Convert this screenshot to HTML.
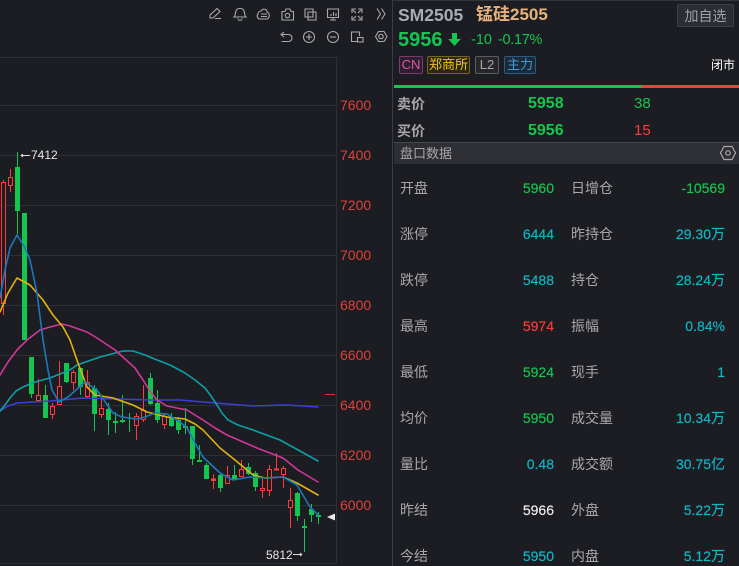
<!DOCTYPE html>
<html lang="zh"><head><meta charset="utf-8"><title>SM2505</title>
<style>
html,body{margin:0;padding:0;background:#1c1d22}
body{width:739px;height:566px;position:relative;overflow:hidden;font-family:"Liberation Sans","Noto Sans CJK SC",sans-serif;color:#aaa}
.a{position:absolute;white-space:nowrap;line-height:20px}
.l{color:#a8a8a8;font-size:14px}
.v{font-size:14px;text-align:right;-webkit-text-stroke:.15px currentColor}
.g{color:#14c64f}.r{color:#ff3b3b}.c{color:#0fb8c8}.w{color:#eee}
.tag{position:absolute;top:56px;height:18px;box-sizing:border-box;border:1px solid;border-radius:2px;font-size:13px;line-height:16px;text-align:center;white-space:nowrap}
</style></head><body>
<svg class="a" style="left:0;top:0;line-height:0" width="392" height="566" viewBox="0 0 392 566" fill="none">
<g stroke="#2f3034"><path d="M0 57.500H336.500V563.500H0M0 105.500H336M0 155.500H336M0 205.500H336M0 255.500H336M0 305.500H336M0 355.500H336M0 405.500H336M0 455.500H336M0 505.500H336"/></g>
<g stroke="#a9a9a9" stroke-width="1.100">
<path d="M210 18l0-3 7-6.500 3 3-7 6.500zM215 18.500h6"/>
<path d="M234 17c2-2 1-4 2-6 1-3.500 7-3.500 8 0 1 2 0 4 2 6zM238 18.500a2 2 0 0 0 4 0"/>
<path d="M260 19a3 3 0 0 1-2-5c0-2 2-3 3-3 2-3 6-2 6 1 3 1 3 6 0 7zM261 14h6M261 16.500h6"/>
<path d="M282 11.500h3l1-2.500h4l1 2.500h2.500v8.500h-11.500z"/><circle cx="287.500" cy="15.500" r="2.200"/>
<path d="M305 9h8v8h-8zM308 12h8v8h-8z"/>
<path d="M327.500 9h11v8.500h-11zM333 17.500v2M330 20h6"/><path d="M331 16v-2M333.500 16v-4M336 16v-3"/>
<path d="M352 13V9h4M358 9h4v4M362 16v4h-4M356 20h-4v-4M353 10l3 3M361 10l-3 3M361 19l-3-3M353 19l3-3"/>
<path d="M377 8.500l3.500 5.500-3.500 5.500M381.500 8.500l3.500 5.500-3.500 5.500"/>
<path d="M284 32l-3 2.500 3 2.500M281 34.500h7.500a3.500 3.500 0 0 1 0 7h-7"/>
<circle cx="309" cy="37" r="5.500"/><path d="M306 37h6M309 34v6"/>
<circle cx="333" cy="37" r="5.500"/><path d="M330 37h6"/>
<path d="M358 41.500h-6.500V32h8v4M357.500 37.500h5.500v4.500h-5.500z"/>
<path d="M378.500 31.500h5.500l3 5-3 5h-5.500l-3-5z"/><circle cx="381" cy="36.500" r="2.200"/>
</g>
<!-- green candles -->
<g fill="#14c64f" stroke="none">
<rect x="17" y="152" width="1" height="82"/><rect x="15" y="167" width="5" height="44"/>
<rect x="22" y="213" width="5" height="127"/>
<rect x="31" y="357" width="1" height="41"/><rect x="29" y="357" width="5" height="37"/>
<rect x="45" y="385" width="1" height="33"/><rect x="43" y="395" width="5" height="23"/>
<rect x="66" y="363" width="1" height="20"/><rect x="64" y="363" width="5" height="19"/>
<rect x="80" y="368" width="1" height="27"/><rect x="78" y="368" width="5" height="19"/>
<rect x="94" y="385" width="1" height="46"/><rect x="92" y="388" width="5" height="26"/>
<rect x="108" y="403" width="1" height="32"/><rect x="106" y="409" width="5" height="11"/>
<rect x="115" y="412" width="1" height="21"/><rect x="113" y="421" width="5" height="2"/>
<rect x="122" y="395" width="1" height="28"/><rect x="120" y="420" width="5" height="2"/>
<rect x="129" y="413" width="1" height="19"/>
<rect x="150" y="373" width="1" height="32"/><rect x="148" y="378" width="5" height="26"/>
<rect x="157" y="390" width="1" height="33"/><rect x="155" y="403" width="5" height="17"/>
<rect x="171" y="413" width="1" height="14"/><rect x="169" y="417" width="5" height="9"/>
<rect x="178" y="417" width="1" height="17"/><rect x="176" y="420" width="5" height="10"/>
<rect x="185" y="408" width="1" height="26"/><rect x="183" y="426" width="5" height="2"/>
<rect x="192" y="426" width="1" height="39"/><rect x="190" y="426" width="5" height="33"/>
<rect x="199" y="445" width="1" height="17"/><rect x="197" y="460" width="5" height="2"/>
<rect x="206" y="463" width="1" height="16"/><rect x="204" y="465" width="5" height="14"/>
<rect x="220" y="473" width="1" height="19"/><rect x="218" y="475" width="5" height="13"/>
<rect x="234" y="465" width="1" height="14"/><rect x="232" y="475" width="5" height="4"/>
<rect x="248" y="463" width="1" height="12"/><rect x="246" y="467" width="5" height="7"/>
<rect x="255" y="471" width="1" height="20"/><rect x="253" y="473" width="5" height="14"/>
<rect x="297" y="492" width="1" height="29"/><rect x="295" y="493" width="5" height="23"/>
<rect x="304" y="519" width="1" height="33"/><rect x="302" y="526" width="5" height="2"/>
<rect x="311" y="504" width="1" height="18"/><rect x="309" y="509" width="5" height="6"/>
<rect x="318" y="512" width="1" height="12"/><rect x="316" y="515" width="5" height="2"/>
</g>
<!-- red candles -->
<g stroke="#ff3b3b" fill="#1c1d22">
<path d="M3.500 180V182M3.500 303V315M10.500 169V177M10.500 185V192M38.500 379V395M38.500 400V401M52.500 403V406M52.500 414V419M59.500 361V386M59.500 404V405M73.500 370V372M73.500 382V390M87.500 370V382M87.500 396V399M101.500 397V408M101.500 414V418M136.500 413V416M136.500 425V440M143.500 385V410M143.500 419V422M164.500 414V416M164.500 424V429M213.500 474V489M227.500 466V475M241.500 460V469M262.500 477V488M262.500 490V498M269.500 465V469M269.500 490V496M276.500 453V470M283.500 466V468M283.500 474V488M290.500 488V500M290.500 507V528"/>
<rect x="1.500" y="182.500" width="4" height="121"/>
<rect x="8.500" y="177.500" width="4" height="8"/>
<rect x="36.500" y="395.500" width="4" height="5"/>
<rect x="50.500" y="406.500" width="4" height="8"/>
<rect x="57.500" y="386.500" width="4" height="18"/>
<rect x="71.500" y="372.500" width="4" height="10"/>
<rect x="85.500" y="382.500" width="4" height="14"/>
<rect x="99.500" y="408.500" width="4" height="6"/>
<rect x="134.500" y="416.500" width="4" height="9"/>
<rect x="141.500" y="410.500" width="4" height="9"/>
<rect x="162.500" y="416.500" width="4" height="8"/>
<rect x="211.500" y="479" width="4" height="1.500" fill="#ff3b3b"/>
<rect x="225.500" y="475.500" width="4" height="8"/>
<rect x="239.500" y="469.500" width="4" height="7"/>
<rect x="260.500" y="488.500" width="4" height="2"/>
<rect x="267.500" y="469.500" width="4" height="21"/>
<rect x="274.500" y="469" width="4" height="1" fill="#ff3b3b"/>
<rect x="281.500" y="468.500" width="4" height="6"/>
<rect x="288.500" y="500.500" width="4" height="7"/>
</g>
<!-- MA lines -->
<g stroke-width="1.600" stroke-linejoin="round" stroke-linecap="round">
<polyline stroke="#3a3fd6" points="0,411 8,406 17,403 50,401 83,398 117,399 150,400 180,400 203,402 253,406 287,405 318,407"/>
<polyline stroke="#0f9ea6" points="0,411 5,405 10,398 16,391 23,387 35,382 50,378 70,370 77,365 100,357 123,351 133,351 145,355 157,360 170,365 185,373 195,380 205,388 211,396 217,405 222,413 228,420 238,425 253,430 280,440 300,451 318,461"/>
<polyline stroke="#d0379a" points="0,375 8,362 17,350 27,340 40,330 50,327 62,324 70,326 87,332 97,338 115,350 125,359 135,368 143,380 150,391 157,400 167,406 187,410 203,420 215,428 227,435 257,448 283,458 298,470 318,482"/>
<polyline stroke="#e3b10c" points="0,312 8,293 17,278 30,285 43,300 53,315 63,327 70,340 78,363 87,387 95,395 113,398 133,405 147,412 167,417 185,419 195,424 203,430 220,448 235,460 253,475 265,478 283,477 297,483 318,495"/>
<polyline stroke="#1b78bd" points="0,298 5,270 10,248 17,235 24,246 30,260 37,293 43,340 48,370 52,390 59,402 68,397 85,382 97,390 113,413 122,417 137,419 145,417 155,413 167,414 180,422 187,428 195,443 203,457 220,473 233,480 250,477 267,478 283,477 297,485 310,507 318,515"/>
</g>
<path d="M325 394.500H335" stroke="#e0352f"/>
<path d="M327 517l8-3.500v7z" fill="#eee"/>
<path d="M21 155.500H30M21 155.500l2-1.500M21 155.500l2 1.500" stroke="#ddd"/>
<path d="M293 554.500H302M302 554.500l-2-1.500M302 554.500l-2 1.500" stroke="#ddd"/>
<text x="31" y="159" font-size="12" fill="#e6e6e6" font-family="Liberation Sans">7412</text>
<text x="266" y="559" font-size="12" fill="#e6e6e6" font-family="Liberation Sans">5812</text>
<g font-size="14" fill="#e0403a" font-family="Liberation Sans">
<text x="340" y="110">7600</text><text x="340" y="160">7400</text><text x="340" y="210">7200</text><text x="340" y="260">7000</text><text x="340" y="310">6800</text><text x="340" y="360">6600</text><text x="340" y="410">6400</text><text x="340" y="460">6200</text><text x="340" y="510">6000</text>
</g>
</svg>

<div class="a" style="left:392px;top:0;width:1px;height:566px;background:#3c3d42"></div>
<div class="a" style="left:393px;top:0;width:346px;height:1px;background:#35363a"></div>

<div class="a" style="left:398px;top:5px;font-size:17.500px;font-weight:bold;color:#a9adb3">SM2505</div>
<div class="a" style="left:476px;top:5px;font-size:17px;font-weight:bold;color:#e8b27c">锰硅2505</div>
<div class="a" style="left:677px;top:4px;width:57px;height:23px;box-sizing:border-box;background:#2b2d32;border:1px solid #3d3f44;border-radius:2px;font-size:14px;line-height:22px;text-align:center;color:#9fa3a8">加自选</div>

<div class="a g" style="left:398px;top:30px;font-size:20px;font-weight:bold">5956</div>
<svg class="a" style="left:447px;top:32px" width="15" height="15" viewBox="0 0 15 15"><path d="M5 1h5v6h3.800L7.500 14 1.200 7H5z" fill="#14c64f"/></svg>
<div class="a g" style="left:471px;top:30px;font-size:14.500px">-10</div>
<div class="a g" style="left:498px;top:30px;font-size:14.500px;letter-spacing:-.3px">-0.17%</div>

<div class="tag" style="left:399px;width:24px;border-color:#7a3b6d;color:#e6539f;background:#2a2030">CN</div>
<div class="tag" style="left:427px;width:43px;border-color:#75651f;color:#f2c40f;background:#2a2718">郑商所</div>
<div class="tag" style="left:475px;width:24px;border-color:#5a5c60;color:#a8a8a8;background:#26272b">L2</div>
<div class="tag" style="left:504px;width:32px;border-color:#2b5a82;color:#3d9be0;background:#1c2a38">主力</div>
<div class="a w" style="left:711px;top:55px;font-size:12px;color:#fff">闭市</div>

<div class="a" style="left:394px;top:85px;width:247px;height:3px;background:#14c64f"></div>
<div class="a" style="left:641px;top:85px;width:98px;height:3px;background:#ff3b3b"></div>

<div class="a l" style="left:397px;top:94px;font-weight:bold">卖价</div>
<div class="a g" style="left:528px;top:94px;font-size:16px;font-weight:bold">5958</div>
<div class="a g" style="left:634px;top:94px;font-size:15px">38</div>
<div class="a l" style="left:397px;top:121px;font-weight:bold">买价</div>
<div class="a g" style="left:528px;top:121px;font-size:16px;font-weight:bold">5956</div>
<div class="a r" style="left:634px;top:121px;font-size:15px">15</div>

<div class="a" style="left:394px;top:142px;width:345px;height:22px;background:#2d2f34;border-top:1px solid #45474b;box-sizing:border-box"></div>
<div class="a" style="left:400px;top:144px;font-size:13px;color:#a8a8a8">盘口数据</div>
<svg class="a" style="left:719px;top:144px" width="18" height="18" viewBox="0 0 18 18" fill="none" stroke="#a9a9a9" stroke-width="1.200"><path d="M5 2.500h8l3.500 6.500-3.500 6.500H5L1.500 9z"/><circle cx="9" cy="9" r="2.300"/></svg>

<div class="a l" style="left:400px;top:178px">开盘</div><div class="a v g" style="right:185px;top:178px">5960</div><div class="a l" style="left:571px;top:178px">日增仓</div><div class="a v g" style="right:14px;top:178px">-10569</div>
<div class="a l" style="left:400px;top:224px">涨停</div><div class="a v c" style="right:185px;top:224px">6444</div><div class="a l" style="left:571px;top:224px">昨持仓</div><div class="a v c" style="right:14px;top:224px">29.30万</div>
<div class="a l" style="left:400px;top:270px">跌停</div><div class="a v c" style="right:185px;top:270px">5488</div><div class="a l" style="left:571px;top:270px">持仓</div><div class="a v c" style="right:14px;top:270px">28.24万</div>
<div class="a l" style="left:400px;top:316px">最高</div><div class="a v r" style="right:185px;top:316px">5974</div><div class="a l" style="left:571px;top:316px">振幅</div><div class="a v c" style="right:14px;top:316px">0.84%</div>
<div class="a l" style="left:400px;top:362px">最低</div><div class="a v g" style="right:185px;top:362px">5924</div><div class="a l" style="left:571px;top:362px">现手</div><div class="a v c" style="right:14px;top:362px">1</div>
<div class="a l" style="left:400px;top:408px">均价</div><div class="a v g" style="right:185px;top:408px">5950</div><div class="a l" style="left:571px;top:408px">成交量</div><div class="a v c" style="right:14px;top:408px">10.34万</div>
<div class="a l" style="left:400px;top:454px">量比</div><div class="a v c" style="right:185px;top:454px">0.48</div><div class="a l" style="left:571px;top:454px">成交额</div><div class="a v c" style="right:14px;top:454px">30.75亿</div>
<div class="a l" style="left:400px;top:500px">昨结</div><div class="a v w" style="right:185px;top:500px">5966</div><div class="a l" style="left:571px;top:500px">外盘</div><div class="a v c" style="right:14px;top:500px">5.22万</div>
<div class="a l" style="left:400px;top:546px">今结</div><div class="a v c" style="right:185px;top:546px">5950</div><div class="a l" style="left:571px;top:546px">内盘</div><div class="a v c" style="right:14px;top:546px">5.12万</div>
</body></html>
